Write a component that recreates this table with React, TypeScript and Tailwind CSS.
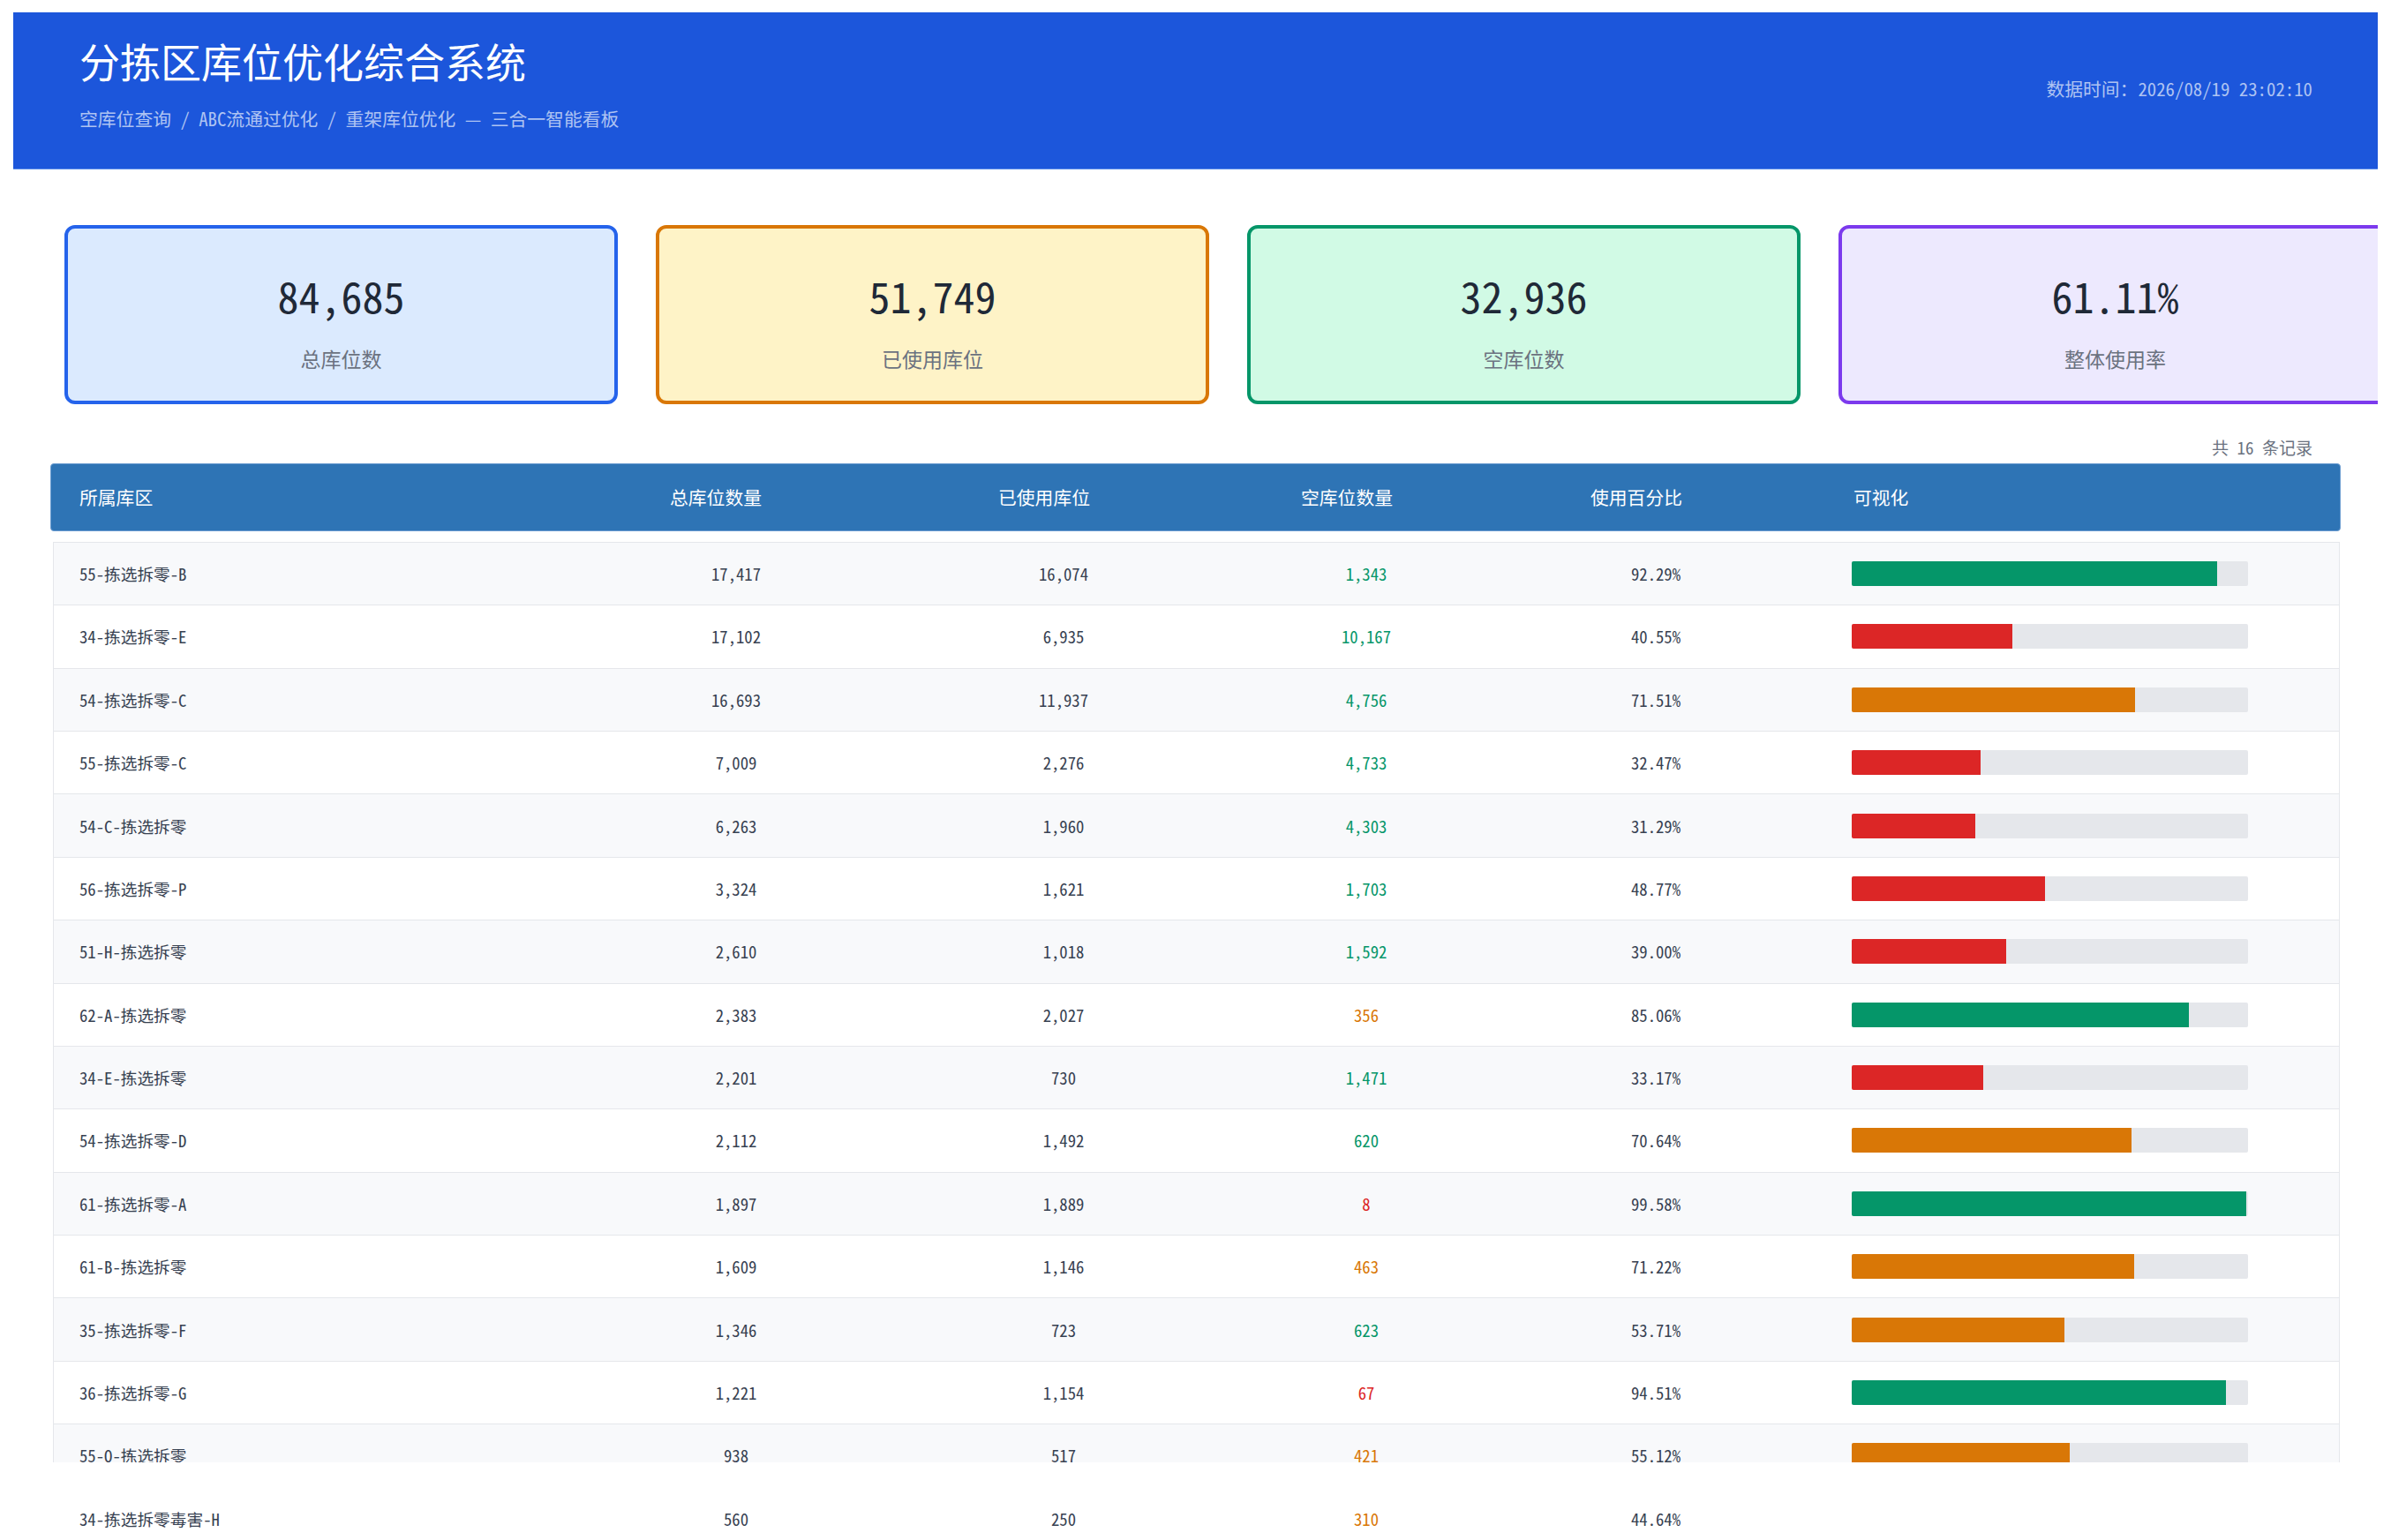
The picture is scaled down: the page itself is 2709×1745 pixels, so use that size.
import React from "react";

type Row = { name: string; total: string; used: string; empty: string; emptyNum: number; pct: number };

const rows: Row[] = [
  { name: "55-拣选拆零-B", total: "17,417", used: "16,074", empty: "1,343", emptyNum: 1343, pct: 92.29 },
  { name: "34-拣选拆零-E", total: "17,102", used: "6,935", empty: "10,167", emptyNum: 10167, pct: 40.55 },
  { name: "54-拣选拆零-C", total: "16,693", used: "11,937", empty: "4,756", emptyNum: 4756, pct: 71.51 },
  { name: "55-拣选拆零-C", total: "7,009", used: "2,276", empty: "4,733", emptyNum: 4733, pct: 32.47 },
  { name: "54-C-拣选拆零", total: "6,263", used: "1,960", empty: "4,303", emptyNum: 4303, pct: 31.29 },
  { name: "56-拣选拆零-P", total: "3,324", used: "1,621", empty: "1,703", emptyNum: 1703, pct: 48.77 },
  { name: "51-H-拣选拆零", total: "2,610", used: "1,018", empty: "1,592", emptyNum: 1592, pct: 39.0 },
  { name: "62-A-拣选拆零", total: "2,383", used: "2,027", empty: "356", emptyNum: 356, pct: 85.06 },
  { name: "34-E-拣选拆零", total: "2,201", used: "730", empty: "1,471", emptyNum: 1471, pct: 33.17 },
  { name: "54-拣选拆零-D", total: "2,112", used: "1,492", empty: "620", emptyNum: 620, pct: 70.64 },
  { name: "61-拣选拆零-A", total: "1,897", used: "1,889", empty: "8", emptyNum: 8, pct: 99.58 },
  { name: "61-B-拣选拆零", total: "1,609", used: "1,146", empty: "463", emptyNum: 463, pct: 71.22 },
  { name: "35-拣选拆零-F", total: "1,346", used: "723", empty: "623", emptyNum: 623, pct: 53.71 },
  { name: "36-拣选拆零-G", total: "1,221", used: "1,154", empty: "67", emptyNum: 67, pct: 94.51 },
  { name: "55-Q-拣选拆零", total: "938", used: "517", empty: "421", emptyNum: 421, pct: 55.12 },
];

const lastRow: Row = { name: "34-拣选拆零毒害-H", total: "560", used: "250", empty: "310", emptyNum: 310, pct: 44.64 };

function emptyColor(n: number) {
  if (n >= 500) return "text-[#059669]";
  if (n >= 100) return "text-[#d97706]";
  return "text-[#dc2626]";
}

function barColor(p: number) {
  if (p >= 80) return "bg-[#059669]";
  if (p >= 50) return "bg-[#d97706]";
  return "bg-[#dc2626]";
}

const FONT = '"Noto Sans CJK SC", "Noto Sans", sans-serif';

const cards = [
  { value: "84,685", label: "总库位数", cls: "bg-[#dbeafe] border-[#2563eb]" },
  { value: "51,749", label: "已使用库位", cls: "bg-[#fef3c7] border-[#d97706]" },
  { value: "32,936", label: "空库位数", cls: "bg-[#d1fae5] border-[#059669]" },
  { value: "61.11%", label: "整体使用率", cls: "bg-[#ede9fe] border-[#7c3aed]" },
];

function BodyRow({ r, striped, plain }: { r: Row; striped: boolean; plain?: boolean }) {
  return (
    <div
      className={
        "grid grid-cols-[587.5px_371px_371px_315px_341px_1fr] items-center h-[71.4px] text-[18.7px] text-[#374151] " +
        (plain ? "" : "border-b border-[#e5e7eb] ") +
        (plain ? "" : striped ? "bg-[#f8f9fb]" : "bg-white")
      }
    >
      <div className="pl-[29px] whitespace-nowrap">{r.name}</div>
      <div className="text-center">{r.total}</div>
      <div className="text-center">{r.used}</div>
      <div className={"text-center " + emptyColor(r.emptyNum)}>{r.empty}</div>
      <div className="text-center">{r.pct.toFixed(2)}%</div>
      <div className="pl-[51.5px]">
        {!plain && (
          <div className="w-[449px] h-[28px] bg-[#e5e7eb] rounded-[2px] overflow-hidden">
            <div className={"h-full " + barColor(r.pct)} style={{ width: `${r.pct}%` }} />
          </div>
        )}
      </div>
    </div>
  );
}

export default function App() {
  return (
    <div
      className="h-screen w-full overflow-hidden bg-white px-[15px] pt-[14px] [font-feature-settings:'hwid']"
      style={{ fontFamily: FONT }}
    >
      <div className="overflow-hidden h-full">
        {/* Header */}
        <header className="bg-[#1c56db] border-b border-[#5d8ce9] flex justify-between items-center pl-[75px] pr-[74px] pt-[27px] pb-[41.4px]">
          <div>
            <h1 className="text-[46px] leading-[55px] text-white font-normal">分拣区库位优化综合系统</h1>
            <div className="mt-[23.4px] text-[20.8px] leading-[30px] text-[#aec3f2] whitespace-nowrap">
              空库位查询 / ABC流通过优化 / 重架库位优化 — 三合一智能看板
            </div>
          </div>
          <div className="pt-[10px] text-[20.8px] leading-[30px] text-[#aec3f2] whitespace-nowrap">
            数据时间：2026/08/19 23:02:10
          </div>
        </header>

        <main className="px-[42px]">
          {/* Cards */}
          <div className="mt-[63px] pl-[16px] flex gap-[43px]">
            {cards.map((c) => (
              <div
                key={c.label}
                className={"w-[627px] h-[203px] shrink-0 border-4 rounded-xl flex flex-col items-center pt-[46px] " + c.cls}
              >
                <div className="text-[48px] leading-[58px] text-[#1f2937]">{c.value}</div>
                <div className="mt-[26.5px] text-[23px] leading-[34px] text-[#6b7280]">{c.label}</div>
              </div>
            ))}
          </div>

          {/* Count */}
          <div className="mt-[35px] pr-[32px] text-right text-[19px] leading-[28px] text-[#6b7280]">共 16 条记录</div>

          {/* Table header */}
          <div className="mt-[4px] h-[77px] bg-[#2e74b5] border border-[#6a9bd0] rounded-[4px] grid grid-cols-[567.5px_371px_373px_313px_343px_1fr] items-center text-[20.8px] text-white">
            <div className="pl-[32px]">所属库区</div>
            <div className="text-center">总库位数量</div>
            <div className="text-center">已使用库位</div>
            <div className="text-center">空库位数量</div>
            <div className="text-center">使用百分比</div>
            <div className="pl-[74.5px]">可视化</div>
          </div>

          {/* Table body */}
          <div className="mt-[12px] ml-[3px] mr-[1px] h-[1043px] overflow-hidden border-x border-t border-[#e5e7eb]">
            {rows.map((r, i) => (
              <BodyRow key={r.name} r={r} striped={i % 2 === 0} />
            ))}
          </div>
          <div className="mt-[29px] ml-[4px] mr-[2px]">
            <BodyRow r={lastRow} striped={false} plain />
          </div>
        </main>
      </div>
    </div>
  );
}
